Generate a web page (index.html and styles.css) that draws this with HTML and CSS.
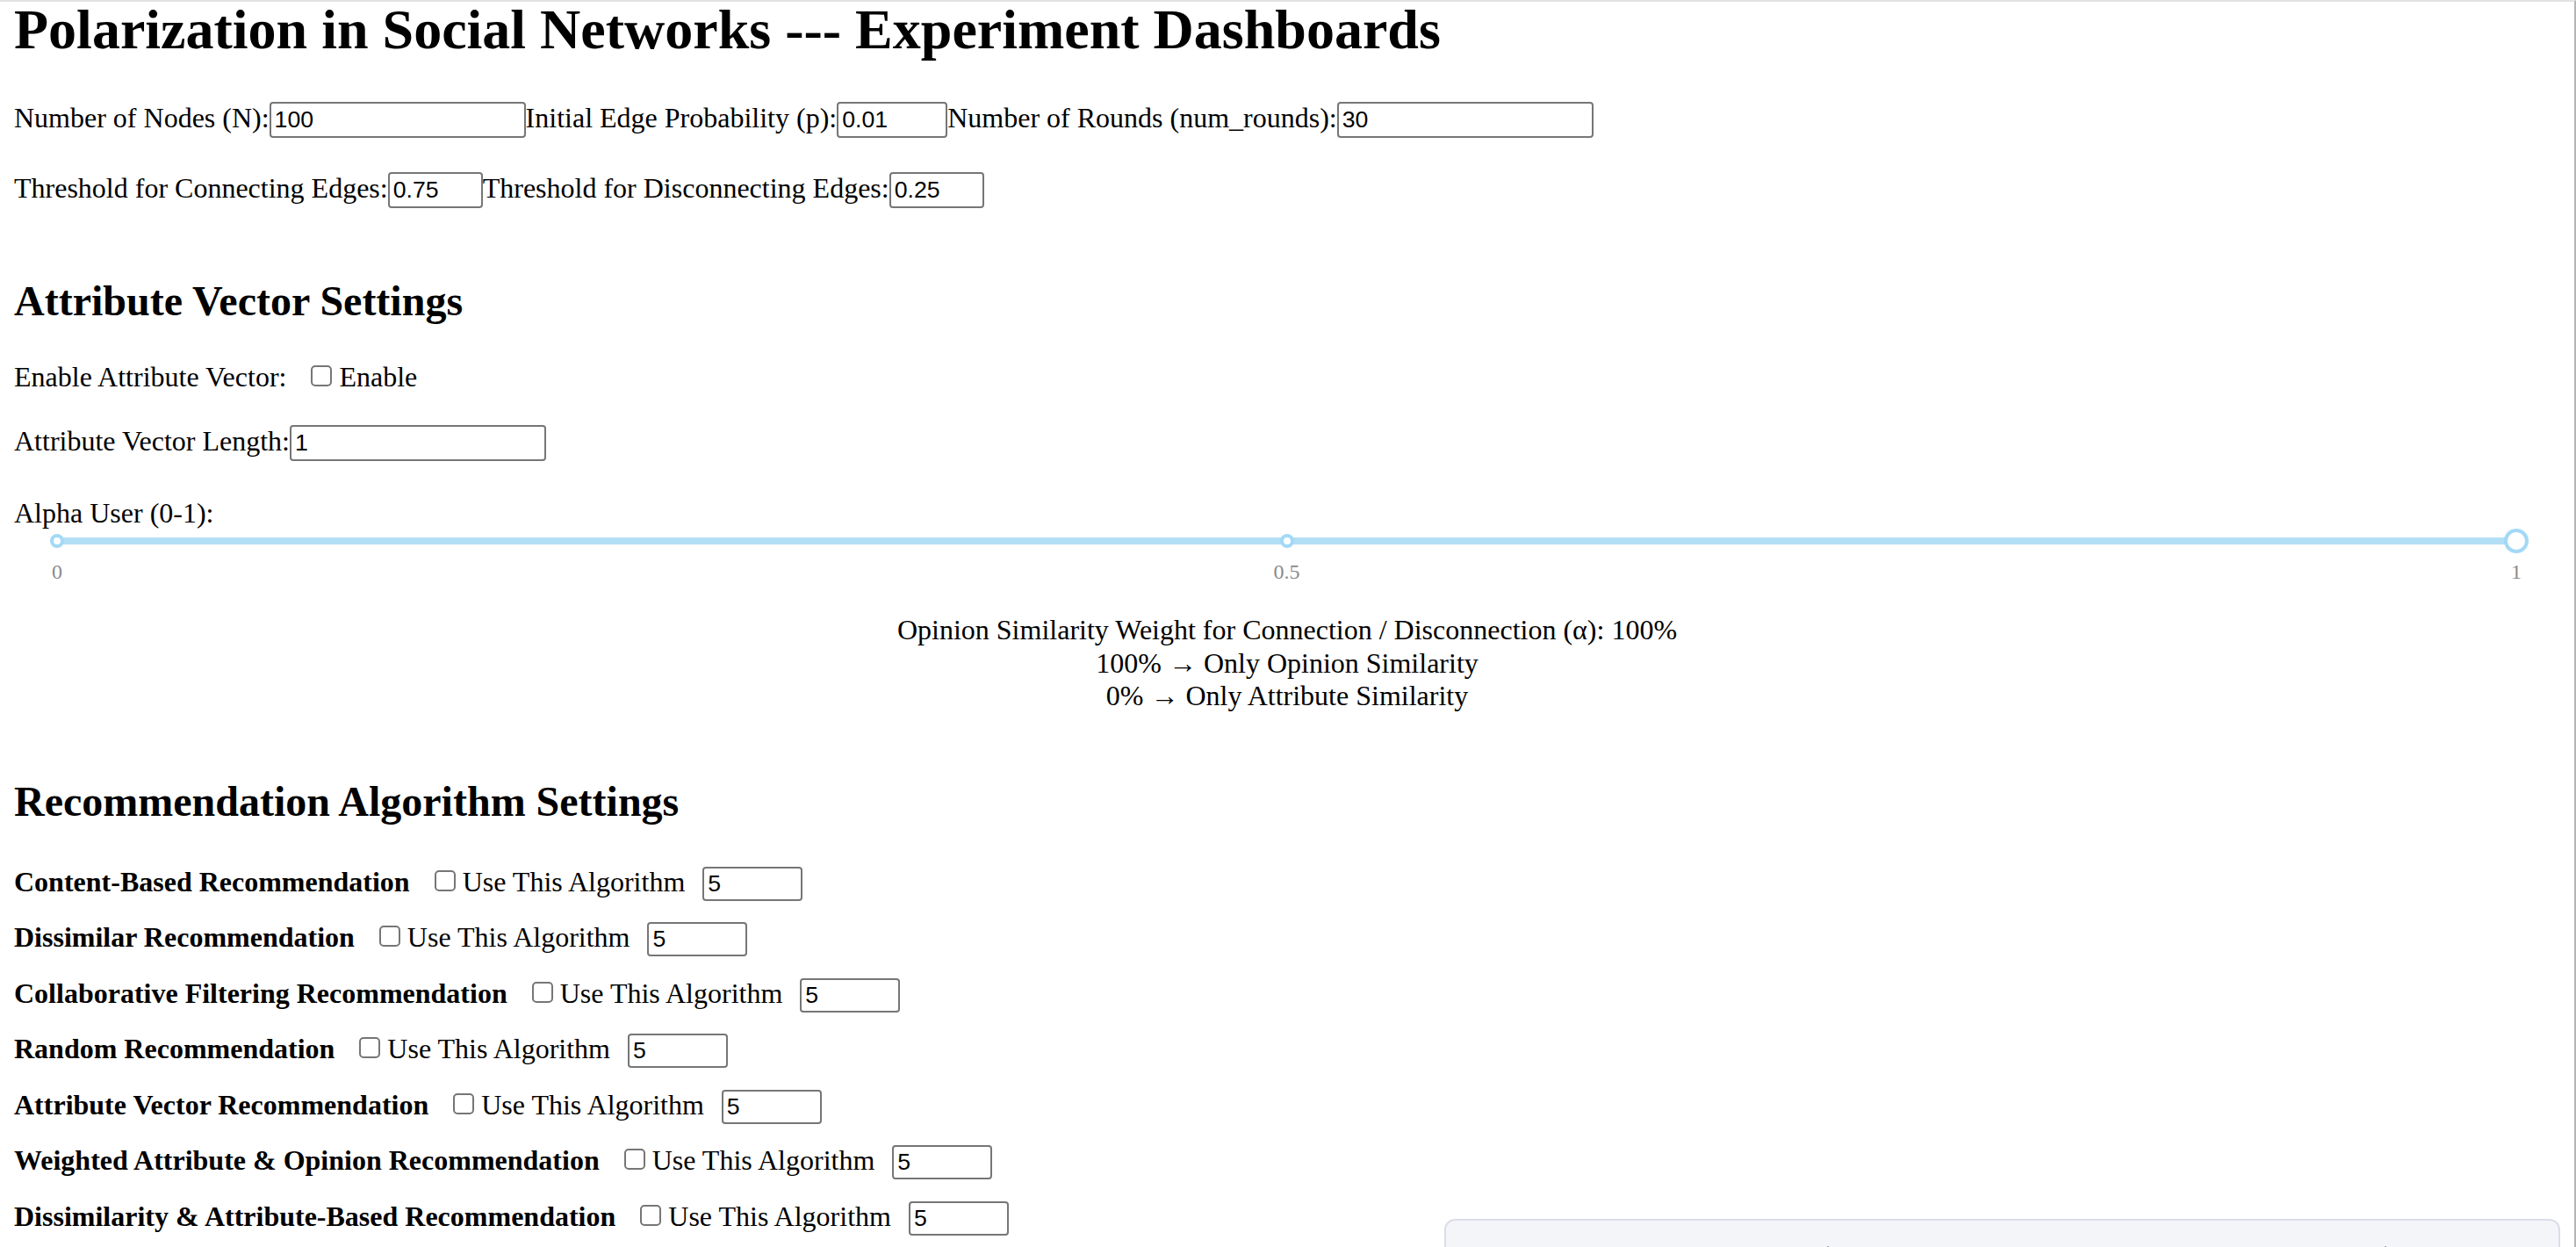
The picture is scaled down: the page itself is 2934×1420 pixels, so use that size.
FILE: index.html
```html
<!DOCTYPE html>
<html lang="en">
<head>
<meta charset="utf-8">
<title>Polarization in Social Networks --- Experiment Dashboards</title>
<link rel="stylesheet" href="styles.css">
</head>
<body>
<div class="frame">
  <main class="page">
    <h1 class="title">Polarization in Social Networks --- Experiment Dashboards</h1>

    <div class="row row-a">
      <label class="field">Number of Nodes (N):<input class="inp w-wide" type="text" value="100"></label><label class="field">Initial Edge Probability (p):<input class="inp w-p" type="text" value="0.01"></label><label class="field">Number of Rounds (num_rounds):<input class="inp w-wide" type="text" value="30"></label>
    </div>
    <div class="row row-b">
      <label class="field">Threshold for Connecting Edges:<input class="inp w-th" type="text" value="0.75"></label><label class="field">Threshold for Disconnecting Edges:<input class="inp w-th" type="text" value="0.25"></label>
    </div>

    <h2 class="section section-attr">Attribute Vector Settings</h2>

    <div class="row row-enable">
      <span class="enable-label">Enable Attribute Vector:</span>
      <label class="field"><input class="check check-enable" type="checkbox"><span>Enable</span></label>
    </div>
    <div class="row row-length">
      <label class="field">Attribute Vector Length:<input class="inp w-wide" type="text" value="1"></label>
    </div>
    <div class="alpha-label">Alpha User (0-1):</div>

    <div class="slider">
      <div class="rail"></div>
      <span class="dot at-0"></span>
      <span class="dot at-50"></span>
      <span class="handle at-100"></span>
      <span class="mark at-0">0</span>
      <span class="mark at-50">0.5</span>
      <span class="mark at-100">1</span>
    </div>

    <div class="info">
      <div>Opinion Similarity Weight for Connection / Disconnection (α): 100%</div>
      <div>100% → Only Opinion Similarity</div>
      <div>0% → Only Attribute Similarity</div>
    </div>

    <h2 class="section section-rec">Recommendation Algorithm Settings</h2>

    <div class="rec-area">
      <div class="rec-list">
        <div class="row rec-row"><strong class="rec-name">Content-Based Recommendation</strong><label class="field"><input class="check check-rec" type="checkbox"><span>Use This Algorithm</span></label><input class="inp inp-sm" type="text" value="5"></div>
        <div class="row rec-row"><strong class="rec-name">Dissimilar Recommendation</strong><label class="field"><input class="check check-rec" type="checkbox"><span>Use This Algorithm</span></label><input class="inp inp-sm" type="text" value="5"></div>
        <div class="row rec-row"><strong class="rec-name">Collaborative Filtering Recommendation</strong><label class="field"><input class="check check-rec" type="checkbox"><span>Use This Algorithm</span></label><input class="inp inp-sm" type="text" value="5"></div>
        <div class="row rec-row"><strong class="rec-name">Random Recommendation</strong><label class="field"><input class="check check-rec" type="checkbox"><span>Use This Algorithm</span></label><input class="inp inp-sm" type="text" value="5"></div>
        <div class="row rec-row"><strong class="rec-name">Attribute Vector Recommendation</strong><label class="field"><input class="check check-rec" type="checkbox"><span>Use This Algorithm</span></label><input class="inp inp-sm" type="text" value="5"></div>
        <div class="row rec-row"><strong class="rec-name">Weighted Attribute &amp; Opinion Recommendation</strong><label class="field"><input class="check check-rec" type="checkbox"><span>Use This Algorithm</span></label><input class="inp inp-sm" type="text" value="5"></div>
        <div class="row rec-row"><strong class="rec-name">Dissimilarity &amp; Attribute-Based Recommendation</strong><label class="field"><input class="check check-rec" type="checkbox"><span>Use This Algorithm</span></label><input class="inp inp-sm" type="text" value="5"></div>
      </div>

      <div class="card">
        <div class="panes">
          <div class="pane pane-1"></div>
          <div class="pane pane-2"></div>
          <div class="pane pane-3"></div>
        </div>
      </div>
    </div>
  </main>
</div>
</body>
</html>
```

FILE: styles.css
```css
* {
  box-sizing: border-box;
}

html,
body {
  margin: 0;
  padding: 0;
  background: #ffffff;
  overflow: hidden;
}

.frame {
  width: 2934px;
  height: 1420px;
  overflow: hidden;
  border-top: 2px solid #e2e2e2;
  border-right: 2px solid #b4b4b4;
}

.page {
  padding: 0 16px;
  font-family: "Liberation Serif", "Times New Roman", serif;
  font-size: 32px;
  color: #000000;
}

.title {
  font-size: 64px;
  font-weight: bold;
  line-height: 66px;
  margin: -1px 0 49px;
}

.row {
  display: flex;
  align-items: baseline;
}

.field {
  display: flex;
  align-items: baseline;
}

.row-a {
  margin-bottom: 39px;
}

.inp {
  font-family: "Liberation Sans", Arial, sans-serif;
  font-size: 26.67px;
  line-height: 29px;
  height: 41px;
  padding: 4px 4px;
  border: 2px solid #767676;
  border-radius: 4px;
  background: #ffffff;
  color: #000000;
  margin: 0;
}

.w-wide {
  width: 292px;
}

.w-p {
  width: 126px;
}

.w-th {
  width: 108px;
}

.section {
  font-size: 48px;
  font-weight: bold;
  margin: 0;
}

.section-attr {
  margin-top: 78px;
  margin-bottom: 41px;
}

.check {
  -webkit-appearance: none;
  appearance: none;
  width: 24px;
  height: 24px;
  border: 2px solid #767676;
  border-radius: 5px;
  background: #ffffff;
  margin: 0 8px 0 0;
  flex: none;
}

.check-enable {
  margin-left: 28px;
}

.row-length {
  margin-top: 36px;
}

.alpha-label {
  margin-top: 41px;
}

.slider {
  position: relative;
  height: 48px;
  margin: -1px 50px 0 49px;
}

.rail {
  position: absolute;
  left: 0;
  right: 0;
  top: 10px;
  height: 8px;
  border-radius: 6px;
  background: #b3dff6;
}

.dot {
  position: absolute;
  top: 6px;
  width: 16px;
  height: 16px;
  margin-left: -8px;
  border: 4px solid #a3d9f6;
  border-radius: 50%;
  background: #ffffff;
}

.handle {
  position: absolute;
  top: 0;
  width: 28px;
  height: 28px;
  margin-left: -14px;
  border: 4px solid #a3d9f6;
  border-radius: 50%;
  background: #ffffff;
}

.mark {
  position: absolute;
  top: 36px;
  font-size: 24px;
  color: #8a8a8a;
  transform: translateX(-50%);
  white-space: nowrap;
}

.at-0 {
  left: 0%;
}

.at-50 {
  left: 50%;
}

.at-100 {
  left: 100%;
}

.info {
  margin-top: 49px;
  text-align: center;
  line-height: 37.5px;
}

.section-rec {
  margin-top: 73px;
  margin-bottom: 46px;
}

.rec-area {
  display: flex;
  justify-content: space-between;
  align-items: flex-start;
}

.rec-row {
  margin-bottom: 23.5px;
}

.rec-name {
  font-weight: bold;
  margin-right: 28px;
}

.inp-sm {
  width: 114px;
  height: 39px;
  line-height: 27px;
  padding: 4px 4px;
  margin-left: 20px;
}

.card {
  flex: none;
  width: 1271px;
  height: 300px;
  margin-top: 402px;
  background: #f4f5f9;
  border: 2px solid #dcdde9;
  border-radius: 12px;
  padding-top: 29px;
}

.panes {
  display: flex;
  height: 120px;
}

.pane-1 {
  width: 434px;
}

.pane-2 {
  width: 635px;
  border-left: 2px solid #a0a4b8;
}

.pane-3 {
  flex: 1;
  border-left: 2px solid #a0a4b8;
}
```
